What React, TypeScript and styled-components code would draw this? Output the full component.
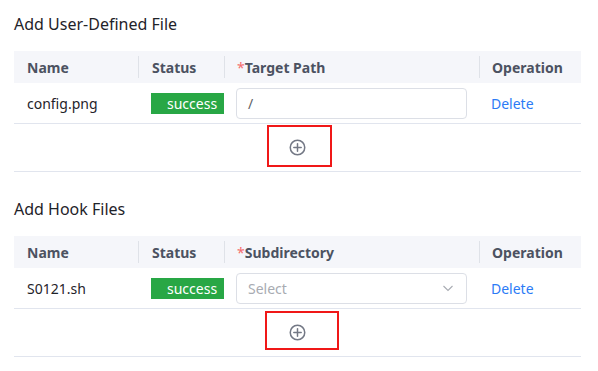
import React from 'react';
import styled, {createGlobalStyle} from "styled-components";

interface FileRow {
  name: string;
  kind: 'input' | 'select';
  value: string;
}

interface Mark {
  left: number;
  top: number;
  width: number;
  height: number;
}

interface Section {
  title: string;
  column: string;
  row: FileRow;
  mark: Mark;
}

const sections: Section[] = [
  {title: 'Add User-Defined File', column: 'Target Path', row: {name: 'config.png', kind: 'input', value: '/'}, mark: {left: 253, top: 1, width: 65, height: 42}},
  {title: 'Add Hook Files', column: 'Subdirectory', row: {name: 'S0121.sh', kind: 'select', value: 'Select'}, mark: {left: 251, top: 2, width: 74, height: 39}},
];

const GlobalStyle = createGlobalStyle`
  body {
    margin: 0;
    background: #ffffff;
    font-family: "Noto Sans", "Open Sans", sans-serif;
    color: #1f2329;
  }
`

const Page = styled.div`
  width: 567px;
  padding: 12px 0 0 14px;
`

const Block = styled.section`
  & + & {
    margin-top: 25px;
  }
`

const Title = styled.h2`
  margin: 0 0 15px 0;
  font-size: 16px;
  line-height: 24px;
  font-weight: 400;
  color: #1f2329;
`

const Grid = styled.div`
  display: grid;
  grid-template-columns: 125px 86px 255px 101px;
`

const HeadCell = styled.div<{sep?: boolean; pad?: number}>`
  position: relative;
  height: 32px;
  display: flex;
  align-items: center;
  padding-left: ${(p) => p.pad ?? 13}px;
  background: #f5f6fa;
  font-size: 14px;
  font-weight: 700;
  color: #4c5261;
  &::after {
    content: '';
    display: ${(p) => (p.sep ? 'block' : 'none')};
    position: absolute;
    right: 0;
    top: 5px;
    bottom: 5px;
    width: 1px;
    background: #dfe2e8;
  }
`

const Star = styled.span`
  color: #f56c6c;
  font-weight: 400;
`

const Cell = styled.div<{pad?: number}>`
  height: 40px;
  display: flex;
  align-items: center;
  padding-left: ${(p) => p.pad ?? 13}px;
  border-bottom: 1px solid #e1e5ee;
  font-size: 14px;
  color: #1f2329;
`

const Badge = styled.span`
  width: 73px;
  height: 21px;
  box-sizing: border-box;
  padding-left: 16px;
  display: flex;
  align-items: center;
  background: #28a745;
  color: #ffffff;
  font-size: 14px;
`

const Field = styled.div<{placeholder?: boolean}>`
  width: 231px;
  height: 31px;
  box-sizing: border-box;
  border: 1px solid #dcdfe6;
  border-radius: 4px;
  display: flex;
  align-items: center;
  justify-content: space-between;
  padding: 0 12px 0 11px;
  font-size: 14px;
  color: ${(p) => (p.placeholder ? '#a8abb2' : '#606266')};
`

const DeleteLink = styled.a`
  color: #2c7bf6;
  font-size: 14px;
  cursor: pointer;
`

const AddRow = styled.div`
  position: relative;
  height: 47px;
  display: flex;
  align-items: center;
  justify-content: center;
  border-bottom: 1px solid #e1e5ee;
`

const Highlight = styled.div`
  position: absolute;
  box-sizing: border-box;
  border: 2px solid #f01818;
  pointer-events: none;
`

const PlusIcon = () => (
  <svg width="17" height="17" viewBox="0 0 17 17" fill="none" stroke="#737885" strokeWidth="1.5" strokeLinecap="round">
    <circle cx="8.5" cy="8.5" r="7.25" />
    <line x1="8.5" y1="4.8" x2="8.5" y2="12.2" />
    <line x1="4.8" y1="8.5" x2="12.2" y2="8.5" />
  </svg>
);

const Chevron = () => (
  <svg width="12" height="12" viewBox="0 0 12 12" fill="none" stroke="#a8abb2" strokeWidth="1.1">
    <polyline points="1.5,4 6,8.5 10.5,4" />
  </svg>
);

const App = () => {
  return (
    <Page>
      <GlobalStyle />
      {sections.map((s) => (
        <Block key={s.title}>
          <Title>{s.title}</Title>
          <Grid>
            <HeadCell sep>Name</HeadCell>
            <HeadCell sep>Status</HeadCell>
            <HeadCell sep pad={12}><Star>*</Star>{s.column}</HeadCell>
            <HeadCell pad={12}>Operation</HeadCell>
            <Cell>{s.row.name}</Cell>
            <Cell pad={12}><Badge>success</Badge></Cell>
            <Cell pad={11}>
              <Field placeholder={s.row.kind === 'select'}>
                <span>{s.row.value}</span>
                {s.row.kind === 'select' && <Chevron />}
              </Field>
            </Cell>
            <Cell pad={11}><DeleteLink>Delete</DeleteLink></Cell>
          </Grid>
          <AddRow>
            <PlusIcon />
            <Highlight style={{left: s.mark.left, top: s.mark.top, width: s.mark.width, height: s.mark.height}} />
          </AddRow>
        </Block>
      ))}
    </Page>
  );
};

export default App;
